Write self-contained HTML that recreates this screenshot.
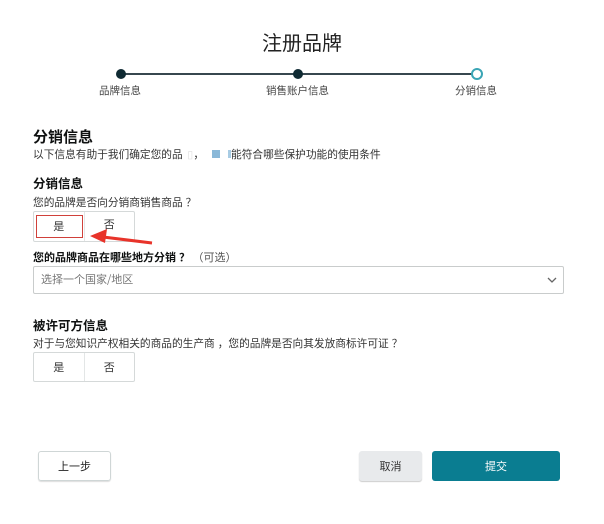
<!DOCTYPE html>
<html><head><meta charset="utf-8"><style>
*{margin:0;padding:0;box-sizing:border-box}
body{width:604px;height:524px;background:#fff;font-family:"Noto Sans CJK SC","Liberation Sans",sans-serif;color:#0f1111;position:relative;overflow:hidden}
.a{position:absolute;white-space:nowrap}
.q{margin-left:3px}
.seg{position:absolute;border:1px solid #d5d9d9;display:flex;border-radius:2px}
.seg div{flex:1;text-align:center;font-size:11px;color:#333}
.seg div+div{border-left:1px solid #e3e6e6}
.btn{position:absolute;font-size:11px;text-align:center;border-radius:3px}
</style></head><body>
<div class="a" style="left:0;width:604px;text-align:center;top:27px;font-size:20px;color:#222">注册品牌</div>
<div class="a" style="left:121px;top:73px;width:356px;height:2px;background:#37474f"></div>
<div class="a" style="left:116px;top:69px;width:10px;height:10px;border-radius:50%;background:#0f2a33"></div>
<div class="a" style="left:293px;top:69px;width:10px;height:10px;border-radius:50%;background:#0f2a33"></div>
<div class="a" style="left:471px;top:68px;width:12px;height:12px;border-radius:50%;background:#fff;border:2px solid #3aa5b5"></div>
<div class="a" style="left:99px;top:83px;font-size:10.5px;color:#444">品牌信息</div>
<div class="a" style="left:266px;top:83px;font-size:10.5px;color:#444">销售账户信息</div>
<div class="a" style="left:455px;top:83px;font-size:10.5px;color:#444">分销信息</div>

<div class="a" style="left:33px;top:126px;font-size:15px;font-weight:bold">分销信息</div>
<div class="a" style="left:33px;top:147px;font-size:10.7px;color:#333">以下信息有助于我们确定您的品<span style="color:#ddd">&nbsp;&nbsp;▯</span>，<span style="display:inline-block;width:8px;height:8px;background:#8ab8d8;margin:0 8px"></span><span style="display:inline-block;width:3px;height:8px;background:#a8cce4"></span>能符合哪些保护功能的使用条件</div>
<div class="a" style="left:33px;top:173px;font-size:12.5px;font-weight:bold">分销信息</div>
<div class="a" style="left:33px;top:195px;font-size:10.7px;color:#333">您的品牌是否向分销商销售商品<span class="q">？</span></div>
<div class="seg" style="left:33px;top:211px;width:102px;height:31px"><div style="line-height:29px">是</div><div style="line-height:25px">否</div></div>
<div class="a" style="left:36px;top:215px;width:47px;height:23px;border:1.5px solid #d0403a"></div>
<svg class="a" style="left:85px;top:226px" width="70" height="22"><path d="M67 17 L18 11" stroke="#e8332a" stroke-width="3"/><path d="M5 10 L22 3 L20 17 Z" fill="#e8332a"/></svg>

<div class="a" style="left:33px;top:249px;font-size:11px;font-weight:bold">您的品牌商品在哪些地方分销<span class="q">？</span> <span style="font-weight:normal;color:#555">（可选）</span></div>
<div class="a" style="left:33px;top:266px;width:531px;height:28px;border:1px solid #c9cccc;border-radius:2px;background:#fff"></div>
<div class="a" style="left:41px;top:271px;font-size:11px;color:#777">选择一个国家/地区</div>
<svg class="a" style="left:547px;top:276px" width="10" height="8"><path d="M1 2 L5 6 L9 2" stroke="#666" stroke-width="1.3" fill="none"/></svg>

<div class="a" style="left:33px;top:315px;font-size:12.5px;font-weight:bold">被许可方信息</div>
<div class="a" style="left:33px;top:336px;font-size:10.7px;color:#333">对于与您知识产权相关的商品的生产商<span class="q">，</span>您的品牌是否向其发放商标许可证<span class="q">？</span></div>
<div class="seg" style="left:33px;top:352px;width:102px;height:30px"><div style="line-height:28px">是</div><div style="line-height:28px">否</div></div>

<div class="btn" style="left:38px;top:451px;width:73px;height:30px;border:1px solid #cfd6d6;line-height:28px;box-shadow:0 1px 1px #ddd;color:#222">上一步</div>
<div class="btn" style="left:359px;top:451px;width:63px;height:30px;background:#e8eaec;line-height:30px;box-shadow:0 1px 1px #ccc;color:#333">取消</div>
<div class="btn" style="left:432px;top:451px;width:128px;height:30px;background:#0a7d91;line-height:30px;color:#fff">提交</div>
</body></html>
